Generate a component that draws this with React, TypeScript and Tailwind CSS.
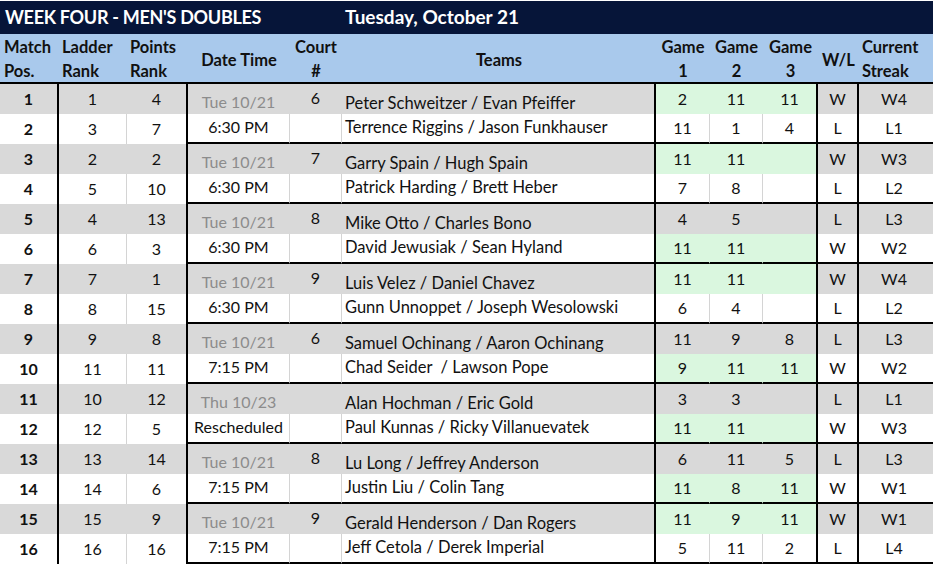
import React from 'react';

type Row = {
  pos: number;
  ladder: number;
  points: number;
  date: string;
  court: string;
  team: string;
  g: string[];
  wl: string;
  streak: string;
};

const ROWS: Row[] = [
  { pos: 1, ladder: 1, points: 4, date: 'Tue 10/21', court: '6', team: 'Peter Schweitzer / Evan Pfeiffer', g: ['2', '11', '11'], wl: 'W', streak: 'W4' },
  { pos: 2, ladder: 3, points: 7, date: '6:30 PM', court: '', team: 'Terrence Riggins / Jason Funkhauser', g: ['11', '1', '4'], wl: 'L', streak: 'L1' },
  { pos: 3, ladder: 2, points: 2, date: 'Tue 10/21', court: '7', team: 'Garry Spain / Hugh Spain', g: ['11', '11', ''], wl: 'W', streak: 'W3' },
  { pos: 4, ladder: 5, points: 10, date: '6:30 PM', court: '', team: 'Patrick Harding / Brett Heber', g: ['7', '8', ''], wl: 'L', streak: 'L2' },
  { pos: 5, ladder: 4, points: 13, date: 'Tue 10/21', court: '8', team: 'Mike Otto / Charles Bono', g: ['4', '5', ''], wl: 'L', streak: 'L3' },
  { pos: 6, ladder: 6, points: 3, date: '6:30 PM', court: '', team: 'David Jewusiak / Sean Hyland', g: ['11', '11', ''], wl: 'W', streak: 'W2' },
  { pos: 7, ladder: 7, points: 1, date: 'Tue 10/21', court: '9', team: 'Luis Velez / Daniel Chavez', g: ['11', '11', ''], wl: 'W', streak: 'W4' },
  { pos: 8, ladder: 8, points: 15, date: '6:30 PM', court: '', team: 'Gunn Unnoppet / Joseph Wesolowski', g: ['6', '4', ''], wl: 'L', streak: 'L2' },
  { pos: 9, ladder: 9, points: 8, date: 'Tue 10/21', court: '6', team: 'Samuel Ochinang / Aaron Ochinang', g: ['11', '9', '8'], wl: 'L', streak: 'L3' },
  { pos: 10, ladder: 11, points: 11, date: '7:15 PM', court: '', team: 'Chad Seider\u00a0 / Lawson Pope', g: ['9', '11', '11'], wl: 'W', streak: 'W2' },
  { pos: 11, ladder: 10, points: 12, date: 'Thu 10/23', court: '', team: 'Alan Hochman / Eric Gold', g: ['3', '3', ''], wl: 'L', streak: 'L1' },
  { pos: 12, ladder: 12, points: 5, date: 'Rescheduled', court: '', team: 'Paul Kunnas / Ricky Villanuevatek', g: ['11', '11', ''], wl: 'W', streak: 'W3' },
  { pos: 13, ladder: 13, points: 14, date: 'Tue 10/21', court: '8', team: 'Lu Long / Jeffrey Anderson', g: ['6', '11', '5'], wl: 'L', streak: 'L3' },
  { pos: 14, ladder: 14, points: 6, date: '7:15 PM', court: '', team: 'Justin Liu / Colin Tang', g: ['11', '8', '11'], wl: 'W', streak: 'W1' },
  { pos: 15, ladder: 15, points: 9, date: 'Tue 10/21', court: '9', team: 'Gerald Henderson / Dan Rogers', g: ['11', '9', '11'], wl: 'W', streak: 'W1' },
  { pos: 16, ladder: 16, points: 16, date: '7:15 PM', court: '', team: 'Jeff Cetola / Derek Imperial', g: ['5', '11', '2'], wl: 'L', streak: 'L4' },
];

const font = { fontFamily: 'Lato, "Open Sans", sans-serif' };

// thin excel gridline shows only on white cells
function thin(white: boolean) {
  return white ? 'border-r border-r-[#d4d4d4]' : 'border-r border-r-transparent';
}

function DataRow({ r, i }: { r: Row; i: number }) {
  const first = i % 2 === 0;
  const win = r.wl === 'W';
  const bg = first ? 'bg-[#d9d9d9]' : 'bg-white';
  const white = !first;
  const gBg = win ? 'bg-[#daf7df]' : bg;
  const gWhite = !win && white;
  const sep = first ? '' : 'border-b-2 border-b-black';
  const shift = first ? 'pt-[5px]' : 'pb-[3px]';
  const teamShift = first ? 'pt-[8px]' : 'pb-[1px]';
  const isDate = r.date.startsWith('Tue') || r.date.startsWith('Thu');

  return (
    <div className="flex h-[30px] text-[16px] text-[#111]">
      <div className={`w-[59px] ${bg} border-r-2 border-r-black flex items-center justify-center font-bold`}>{r.pos}</div>
      <div className={`w-[68px] ${bg} ${thin(white)} flex items-center justify-center`}>{r.ladder}</div>
      <div className={`w-[61px] ${bg} border-r-2 border-r-black flex items-center justify-center`}>{r.points}</div>
      <div className={`w-[102px] ${bg} ${thin(white)} ${sep} ${shift} flex items-center justify-center ${isDate ? 'text-[#8c8c8c]' : ''}`}>{r.date}</div>
      <div className={`w-[52px] ${bg} ${thin(white)} ${sep} pb-[2px] flex items-center justify-center`}>{r.court}</div>
      <div className={`w-[314px] ${bg} border-r-2 border-r-black ${sep} ${teamShift} pl-[3px] flex items-center whitespace-pre text-[16.5px]`}>{r.team}</div>
      <div className={`w-[54px] ${gBg} ${thin(gWhite)} ${sep} flex items-center justify-center`}>{r.g[0]}</div>
      <div className={`w-[53px] ${gBg} ${thin(gWhite)} ${sep} flex items-center justify-center`}>{r.g[1]}</div>
      <div className={`w-[55px] ${gBg} border-r-2 border-r-black ${sep} flex items-center justify-center`}>{r.g[2]}</div>
      <div className={`w-[41px] ${bg} border-r-2 border-r-black ${sep} flex items-center justify-center`}>{r.wl}</div>
      <div className={`w-[74px] ${bg} ${sep} flex items-center justify-center pr-[4px]`}>{r.streak}</div>
    </div>
  );
}

export default function App() {
  return (
    <div className="w-[933px] h-[564px] overflow-hidden bg-white" style={font}>
      {/* title band */}
      <div className="flex h-[34px] border-t border-t-white bg-[#061539] text-white font-bold items-center">
        <div className="w-[342px] pl-[5px] text-[18px] tracking-[-0.3px]">WEEK FOUR - MEN'S DOUBLES</div>
        <div className="pl-[3px] text-[19px]">Tuesday, October 21</div>
      </div>

      {/* column headings */}
      <div className="flex h-[50px] bg-[#a9c9ec] border-b-2 border-b-black font-bold text-[16.5px] leading-[24px] text-[#111] pt-[1px]">
        <div className="w-[59px] pl-[4px] flex flex-col justify-center"><span>Match</span><span>Pos.</span></div>
        <div className="w-[68px] pl-[3px] flex flex-col justify-center"><span>Ladder</span><span>Rank</span></div>
        <div className="w-[61px] pl-[3px] flex flex-col justify-center"><span>Points</span><span>Rank</span></div>
        <div className="w-[102px] flex items-center justify-center pt-[3px]">Date Time</div>
        <div className="w-[52px] flex flex-col items-center justify-center"><span>Court</span><span>#</span></div>
        <div className="w-[314px] flex items-center justify-center pt-[3px]">Teams</div>
        <div className="w-[54px] flex flex-col items-center justify-center"><span>Game</span><span>1</span></div>
        <div className="w-[53px] flex flex-col items-center justify-center"><span>Game</span><span>2</span></div>
        <div className="w-[55px] flex flex-col items-center justify-center"><span>Game</span><span>3</span></div>
        <div className="w-[41px] flex items-center justify-center pt-[3px]">W/L</div>
        <div className="w-[74px] pl-[3px] flex flex-col justify-center"><span>Current</span><span>Streak</span></div>
      </div>

      {ROWS.map((r, i) => (
        <DataRow key={r.pos} r={r} i={i} />
      ))}
    </div>
  );
}
